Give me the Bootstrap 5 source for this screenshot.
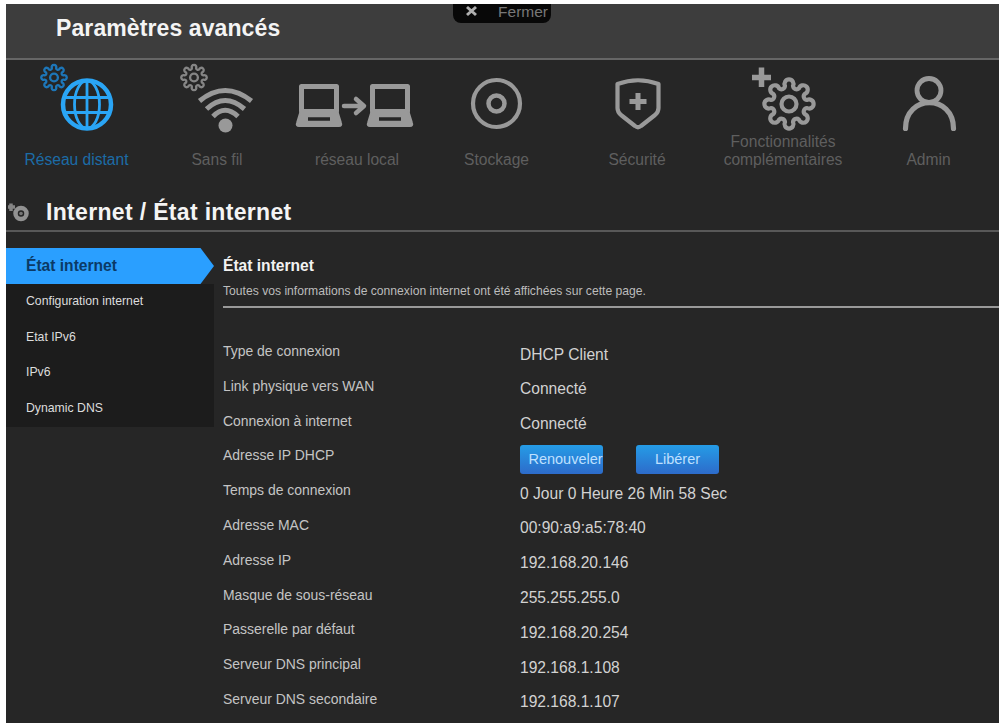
<!DOCTYPE html>
<html lang="fr">
<head>
<meta charset="utf-8">
<meta name="viewport" content="width=device-width, initial-scale=1">
<title>Paramètres avancés</title>
<link href="https://cdn.jsdelivr.net/npm/bootstrap@5.3.0/dist/css/bootstrap.min.css" rel="stylesheet">
<style>
body{background:#fff;font-family:"Liberation Sans",Arial,sans-serif;height:726px;overflow:hidden}
.panel{width:993px;height:719px;margin:4px 0 0 6px;background:#262626;color:#ddd;overflow:hidden}
.top-bar{height:56px;background:#3d3d3d;border-bottom:2px solid #666;padding-left:50px}
.top-bar h1{font-size:23px;font-weight:700;line-height:48px;letter-spacing:.1px;color:#f4f4f4;white-space:nowrap}
.close-tab{top:0;left:447px;width:98px;height:19px;background:#080808;border:0;border-radius:0 0 8px 8px;color:#777;font-size:15.5px;line-height:16px;padding:0 3px 0 12px}
.main-nav{display:grid;grid-template-columns:141px 140px 140px 139px 142px 150px 141px;height:131px}
.nav-cell{color:#5f5f5f;font-size:15.6px;line-height:18px;text-align:center;text-decoration:none}
.nav-cell svg{display:block;width:100%;height:75px;fill:none;stroke:#999;stroke-linecap:round;stroke-linejoin:round}
.nav-cell .cap{display:flex;flex-direction:column;justify-content:flex-end;height:37px;margin-top:-3px}
.nav-cell.on{color:#1c6ca6}
.title-row{height:41px;border-bottom:2px solid #585858}
.title-row h2{font-size:23px;font-weight:700;letter-spacing:.33px;line-height:43px;color:#f4f4f4}
.side{width:208px;padding-top:16px}
.side a{display:block;height:35.7px;line-height:35.7px;padding-left:20px;font-size:12.25px;color:#c4c4c4;background:#1c1c1c;text-decoration:none}
.side a.on{height:36px;line-height:36px;background:#2a9fff;color:#0b3a66;font-weight:700;font-size:15.6px;clip-path:polygon(0 0,93.5% 0,100% 50%,93.5% 100%,0 100%)}
.detail{width:776px;padding-top:24px}
.detail h3{font-size:15.6px;font-weight:700;line-height:20px;color:#f2f2f2}
.intro{font-size:12.15px;line-height:18px;margin-top:6px;color:#bcbcbc;height:26px;border-bottom:2px solid #999}
.info{padding-top:26px}
.info-line{height:34.8px;line-height:34.8px}
.info-line dt{width:297px;font-size:13.95px;font-weight:400;color:#c4c4c4}
.info-line dd{font-size:15.6px;color:#d2d2d2;padding-top:3.5px}
.act{width:83px;height:29px;margin-top:3px;border:0;border-radius:3px;background:linear-gradient(#259ce6,#2d6bca);color:#bfe0ff;font-size:14.5px;line-height:29px;padding:0;overflow:hidden;white-space:nowrap}
</style>
</head>
<body>
<main class="panel">
  <header class="top-bar position-relative">
    <h1 class="m-0">Paramètres avancés</h1>
    <button class="close-tab position-absolute d-flex justify-content-between">
      <svg width="13" height="14" viewBox="0 0 13 14" stroke="#b0b0b0" stroke-width="3"><path d="M2 3l9 8M11 3l-9 8"/></svg>
      <span>Fermer</span>
    </button>
  </header>

  <svg width="0" height="0" class="d-none">
    <symbol id="cog" viewBox="-27 -27 54 54">
      <path d="M18.060 -4A4.500 4.500 0 1 1 18.060 4A3.600 3.600 0 0 0 15.600 9.940A4.500 4.500 0 1 1 9.940 15.600A3.600 3.600 0 0 0 4 18.060A4.500 4.500 0 1 1 -4 18.060A3.600 3.600 0 0 0 -9.940 15.600A4.500 4.500 0 1 1 -15.600 9.940A3.600 3.600 0 0 0 -18.060 4A4.500 4.500 0 1 1 -18.060 -4A3.600 3.600 0 0 0 -15.600 -9.940A4.500 4.500 0 1 1 -9.940 -15.600A3.600 3.600 0 0 0 -4 -18.060A4.500 4.500 0 1 1 4 -18.060A3.600 3.600 0 0 0 9.940 -15.600A4.500 4.500 0 1 1 15.600 -9.940A3.600 3.600 0 0 0 18.060 -4Z"/>
      <circle r="7.500"/>
    </symbol>
    <symbol id="laptop" viewBox="0 0 48 46">
      <path d="M6.500 28V3.500H41.500V28" stroke-width="5"/>
      <path d="M6 27H42L46 40Q47 43 44 43H4Q1 43 2 40Z" fill="#999" stroke-width="2"/>
      <path d="M13 36H35" stroke="#262626" stroke-width="3.500" stroke-linecap="butt"/>
    </symbol>
  </svg>

  <nav class="main-nav">
    <a class="nav-cell on"><svg viewBox="6 60 141 75">
      <use href="#cog" x="40" y="63.500" width="28" height="28" stroke="#1d76b8" stroke-width="4.500"/>
      <g stroke="#2aa5f5"><circle cx="87" cy="104.500" r="24" stroke-width="4.500"/><g stroke-width="2.800"><ellipse cx="87" cy="104.500" rx="12.500" ry="24"/><path d="M87 81V128M65 97.500H109M65 112.500H109" /></g></g>
    </svg><span class="cap">Réseau distant</span></a>
    <a class="nav-cell"><svg viewBox="147 60 140 75">
      <use href="#cog" x="180" y="63.500" width="28" height="28" stroke-width="4.500" stroke="#858585"/>
      <g stroke-width="5" stroke-linecap="butt"><path d="M199.500 101Q225 80 251.500 101M206.500 109Q225 92 244.500 109M213 116.500Q225 104 238 116.500"/></g>
      <circle cx="225.500" cy="125.500" r="7" fill="#999" stroke="none"/>
    </svg><span class="cap">Sans fil</span></a>
    <a class="nav-cell"><svg viewBox="287 60 140 75">
      <use href="#laptop" x="295" y="83" width="48" height="46"/>
      <use href="#laptop" x="366" y="83" width="48" height="46"/>
      <path d="M344 106H363M356 99L364 106L356 113" stroke-width="4.500"/>
    </svg><span class="cap">réseau local</span></a>
    <a class="nav-cell"><svg viewBox="427 60 139 75">
      <circle cx="496.500" cy="103.500" r="23.500" stroke-width="4.200"/><circle cx="496.500" cy="103.500" r="8" stroke-width="4.500"/>
    </svg><span class="cap">Stockage</span></a>
    <a class="nav-cell"><svg viewBox="566 60 142 75">
      <path d="M617.500 84Q638 76.500 658.500 84V108Q658.500 112 655 115L641 126Q638 128.500 635 126L621 115Q617.500 112 617.500 108Z" stroke-width="4.200"/>
      <path d="M638 93V110M629.500 101.500H646.500" stroke-width="5" stroke-linecap="butt"/>
    </svg><span class="cap">Sécurité</span></a>
    <a class="nav-cell"><svg viewBox="708 60 150 75">
      <path d="M761.500 67.500V87M752 77.500H771" stroke-width="5.500" stroke-linecap="butt"/>
      <use href="#cog" x="762" y="77" width="54" height="54" stroke-width="4.200"/>
    </svg><span class="cap">Fonctionnalités<br>complémentaires</span></a>
    <a class="nav-cell"><svg viewBox="858 60 141 75">
      <circle cx="929" cy="90.500" r="12" stroke-width="4.800"/><path d="M905.500 128.500C905.500 94 953.500 94 953.500 128.500" stroke-width="5.200"/>
    </svg><span class="cap">Admin</span></a>
  </nav>

  <div class="title-row d-flex">
    <svg width="40" height="39" viewBox="6 191 40 39" class="flex-shrink-0" fill="none"><circle cx="21" cy="213.500" r="5.500" stroke="#929292" stroke-width="4.500"/><circle cx="21" cy="213.500" r="1.800" fill="#777"/><path d="M8 207H15M11 203.500V211" stroke="#858585" stroke-width="3.500"/></svg>
    <h2 class="m-0">Internet / État internet</h2>
  </div>

  <div class="d-flex">
    <nav class="side flex-shrink-0">
      <a class="on">État internet</a>
      <a>Configuration internet</a>
      <a>Etat IPv6</a>
      <a>IPv6</a>
      <a>Dynamic DNS</a>
    </nav>
    <section class="detail ms-auto">
      <h3 class="m-0">État internet</h3>
      <p class="intro mb-0">Toutes vos informations de connexion internet ont été affichées sur cette page.</p>
      <dl class="info m-0">
        <div class="info-line d-flex"><dt>Type de connexion</dt><dd>DHCP Client</dd></div>
        <div class="info-line d-flex"><dt>Link physique vers WAN</dt><dd>Connecté</dd></div>
        <div class="info-line d-flex"><dt>Connexion à internet</dt><dd>Connecté</dd></div>
        <div class="info-line d-flex"><dt>Adresse IP DHCP</dt><dd class="d-flex align-items-start"><button class="act ps-2">Renouveler</button><button class="act" style="margin-left:33px">Libérer</button></dd></div>
        <div class="info-line d-flex"><dt>Temps de connexion</dt><dd>0 Jour 0 Heure 26 Min 58 Sec</dd></div>
        <div class="info-line d-flex"><dt>Adresse MAC</dt><dd>00:90:a9:a5:78:40</dd></div>
        <div class="info-line d-flex"><dt>Adresse IP</dt><dd>192.168.20.146</dd></div>
        <div class="info-line d-flex"><dt>Masque de sous-réseau</dt><dd>255.255.255.0</dd></div>
        <div class="info-line d-flex"><dt>Passerelle par défaut</dt><dd>192.168.20.254</dd></div>
        <div class="info-line d-flex"><dt>Serveur DNS principal</dt><dd>192.168.1.108</dd></div>
        <div class="info-line d-flex"><dt>Serveur DNS secondaire</dt><dd>192.168.1.107</dd></div>
      </dl>
    </section>
  </div>
</main>
<script src="https://cdn.jsdelivr.net/npm/bootstrap@5.3.0/dist/js/bootstrap.bundle.min.js"></script>
</body>
</html>
